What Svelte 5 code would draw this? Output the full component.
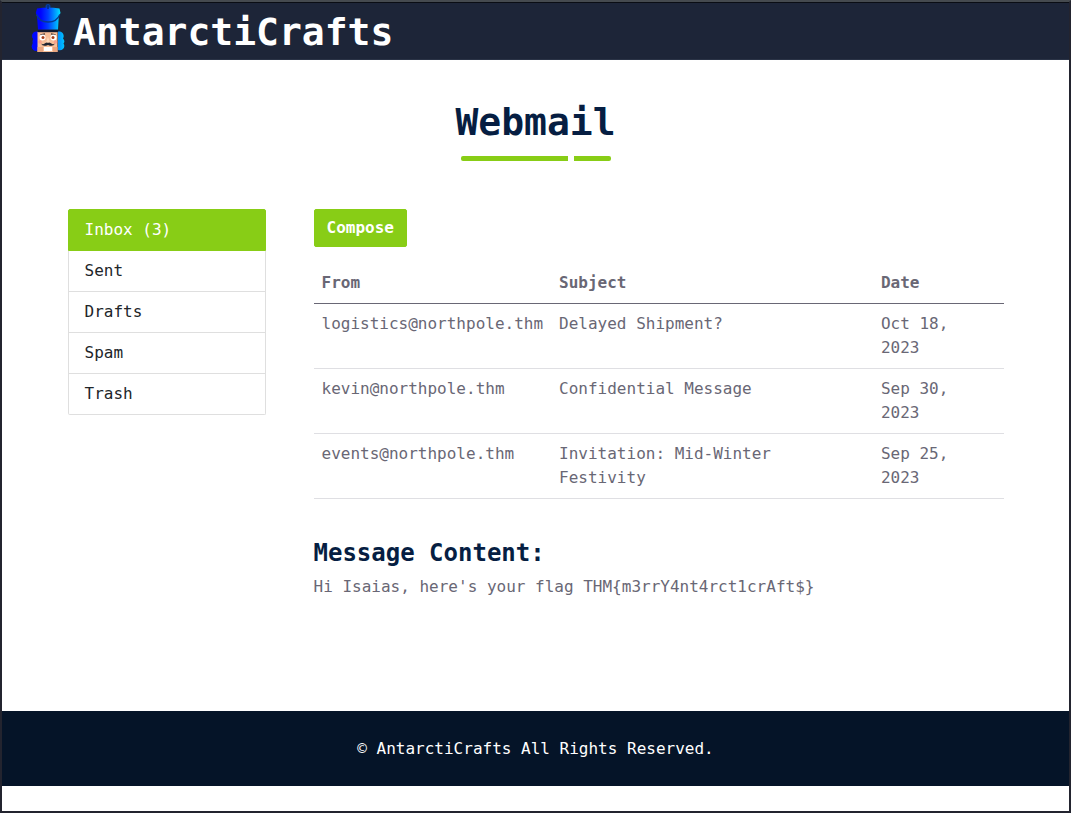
<script>
  const folders = ['Inbox (3)', 'Sent', 'Drafts', 'Spam', 'Trash'];
  const messages = [
    { from: 'logistics@northpole.thm', subject: 'Delayed Shipment?', date: 'Oct 18, 2023' },
    { from: 'kevin@northpole.thm', subject: 'Confidential Message', date: 'Sep 30, 2023' },
    { from: 'events@northpole.thm', subject: 'Invitation: Mid-Winter Festivity', date: 'Sep 25, 2023' }
  ];
  let active = $state(0);
</script>

<div class="page">
  <header>
    <a class="brand" href="#home">
      <svg class="logo" viewBox="0 0 34 48" aria-hidden="true">
        <defs>
          <linearGradient id="hat" x1="0" x2="1">
            <stop offset="0.2" stop-color="#0004ff" />
            <stop offset="0.5" stop-color="#0040ff" />
            <stop offset="0.85" stop-color="#00b0ff" />
            <stop offset="1" stop-color="#00e4ff" />
          </linearGradient>
          <linearGradient id="hair" x1="0" x2="1">
            <stop offset="0" stop-color="#0090ff" />
            <stop offset="1" stop-color="#00c4ff" />
          </linearGradient>
        </defs>
        <circle cx="17" cy="2.5" r="2.5" fill="#06409f" />
        <path d="M6 4.500Q17 2.500 28.500 4.500L29.500 9L27.800 12L27 25.500H7L6 12L4.800 9Z" fill="url(#hat)" />
        <path d="M5.500 10.500C9 20.500 25 20.500 28.800 10.500" fill="none" stroke="#063a90" stroke-width="1.300" />
        <path d="M17 1v4" stroke="#062c78" stroke-width="1.500" />
        <g fill="#0008ff">
          <circle cx="5.500" cy="32" r="4.500" /><circle cx="5" cy="37.500" r="3.500" /><circle cx="5.200" cy="42.500" r="4.500" />
        </g>
        <path d="M27 27.500C31.500 27 34 31 32 34.500C34 37 33.500 38 32.500 39.500C35 43 31.500 47.500 27 46Z" fill="url(#hair)" />
        <path d="M6.500 28H26.500v20H6.500Z" fill="#f6bf99" />
        <path d="M6.500 43H12v5H6.500ZM22 43h4.500v5H22Z" fill="#e9a57f" />
        <path d="M7 26h19.500v2.200H7Z" fill="#101a30" />
        <path d="M9.500 30.800l4.500-1M20 29.800l4.500 1" stroke="#41352f" stroke-width="1.200" />
        <circle cx="11.500" cy="33.500" r="3" fill="#fff" /><circle cx="22.500" cy="33.500" r="3" fill="#fff" />
        <circle cx="12" cy="33.500" r="1.500" fill="#a5401c" /><circle cx="22" cy="33.500" r="1.500" fill="#a5401c" />
        <path d="M17 33l2 5.500h-4Z" fill="#ffd8b8" />
        <circle cx="9" cy="38" r="1.800" fill="#f7a08c" /><circle cx="24.500" cy="38" r="1.800" fill="#f7a08c" />
        <path d="M10 39.500Q12 41 14 39.300Q16 38 17 39Q18 38 20 39.300Q22 41 24 39.500Q22.500 42.500 19 41.700L17 41L15 41.700Q11.500 42.500 10 39.500Z" fill="#202634" />
        <path d="M13 43h8v4h-8Z" fill="#fff" />
      </svg>
      <span>AntarctiCrafts</span>
    </a>
  </header>

  <main>
    <h1>Webmail</h1>
    <div class="columns">
      <nav aria-label="Mail folders">
        {#each folders as folder, i}
          <a href="#folder" class:active={active === i} onclick={() => (active = i)}>{folder}</a>
        {/each}
      </nav>
      <section>
        <button type="button">Compose</button>
        <table>
          <thead>
            <tr><th>From</th><th>Subject</th><th>Date</th></tr>
          </thead>
          <tbody>
            {#each messages as m}
              <tr><td>{m.from}</td><td>{m.subject}</td><td>{m.date}</td></tr>
            {/each}
          </tbody>
        </table>
        <h2>Message Content:</h2>
        <p>Hi Isaias, here's your flag THM&#123;m3rrY4nt4rct1crAft$&#125;</p>
      </section>
    </div>
  </main>

  <footer>© AntarctiCrafts All Rights Reserved.</footer>
</div>

<style>
  :global(body) {
    margin: 0;
    background: #fff;
  }
  .page,
  .page * {
    box-sizing: border-box;
  }
  .page {
    display: flex;
    flex-direction: column;
    min-height: 100vh;
    border: 2px solid #23242f;
    border-top-color: #454a4f;
    font: 16px/24px 'DejaVu Sans Mono', monospace;
    color: #696775;
  }
  header {
    display: flex;
    align-items: flex-start;
    height: 58px;
    padding: 1px 29px 0;
    background: #1d2538;
    border-top: 1px solid #0a0d14;
    border-bottom: 1px solid #2a3346;
  }
  .brand {
    display: flex;
    align-items: flex-start;
    gap: 8px;
    color: #fff;
    font-size: 38px;
    font-weight: 700;
    line-height: 56px;
    text-decoration: none;
  }
  .logo {
    width: 34px;
    height: 48px;
  }
  main {
    width: 100%;
    max-width: 960px;
    margin: 0 auto;
    padding: 40px 12px 112px;
  }
  h1 {
    display: flex;
    flex-direction: column;
    align-items: center;
    gap: 12px;
    margin: 0 0 48px;
    color: #061e42;
    font-size: 38px;
    line-height: 44px;
  }
  h1::after {
    content: '';
    width: 150px;
    height: 5px;
    border-radius: 2px;
    background: linear-gradient(to right, #88cd16 107px, #fff 107px 113px, #88cd16 113px);
  }
  .columns {
    display: flex;
    margin: 0 -24px;
  }
  nav {
    display: flex;
    flex-direction: column;
    flex: 0 0 25%;
    align-self: flex-start;
    padding: 0 24px;
  }
  nav a {
    padding: 8px 16px;
    border: 1px solid #dfdfdf;
    border-top: 0;
    color: #212529;
    text-decoration: none;
  }
  nav a:first-child {
    border-top: 1px solid #dfdfdf;
    border-radius: 2px 2px 0 0;
  }
  nav a:last-child {
    border-radius: 0 0 2px 2px;
  }
  nav a.active {
    background: #88cd16;
    border-color: #88cd16;
    color: #fff;
  }
  section {
    flex: 1;
    min-width: 0;
    padding: 0 24px;
  }
  button {
    display: block;
    padding: 6px 12px;
    border: 1px solid #88cd16;
    border-radius: 2px;
    background: #88cd16;
    color: #fff;
    font: inherit;
    font-weight: 700;
  }
  table {
    width: 100%;
    margin: 16px 0 40px;
    border-collapse: collapse;
  }
  th,
  td {
    padding: 8px;
    border-bottom: 1px solid #dfdfe3;
    text-align: left;
    vertical-align: top;
  }
  th {
    border-bottom-color: #696775;
  }
  h2 {
    margin: 0 0 8px;
    color: #061e42;
    font-size: 24px;
    line-height: 28px;
  }
  p {
    margin: 0;
  }
  footer {
    padding: 26px 16px 25px;
    background: #051428;
    color: #fff;
    text-align: center;
  }
</style>
